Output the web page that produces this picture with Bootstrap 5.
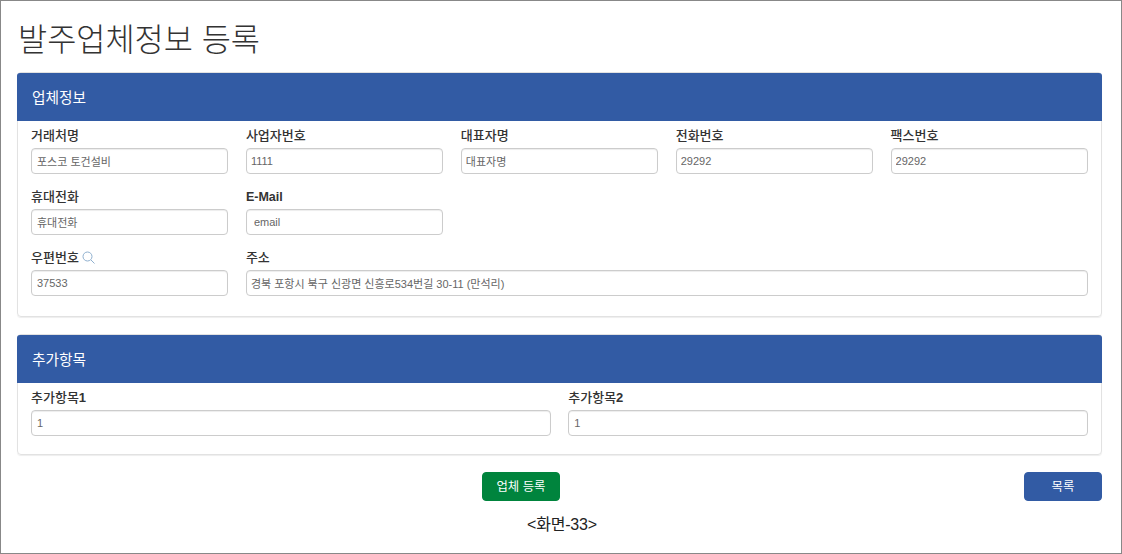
<!DOCTYPE html>
<html lang="ko"><head><meta charset="utf-8">
<link rel="stylesheet" href="https://cdn.jsdelivr.net/npm/bootstrap@5.3.0/dist/css/bootstrap.min.css">
<style>
html,body{height:100%;margin:0}
body{font-family:"Liberation Sans","Noto Sans CJK KR",sans-serif;background:#fff;color:#333}
.frame{height:554px;border:1px solid #888;padding:0 19px 0 16px;overflow:hidden}
.page-ttl{font-family:"Liberation Sans","Noto Sans CJK KR",sans-serif;font-size:31.7px;font-weight:300;line-height:42px;margin:18px 0 11px 1px;color:#333}
.form-box{border:1px solid #e2e2e2;border-radius:4px;margin-bottom:17px;box-shadow:0 1px 1px #eee}
.box-head{background:#325ba4;color:#fff;font-size:14.7px;height:48px;line-height:50px;padding-left:15px;border-radius:3px 3px 0 0;margin:0 -1px}
.box-body{padding:7px 13px 18px 13px}
.box-body-sm{padding-bottom:16px}
.fld-row{--bs-gutter-x:17.5px;--bs-gutter-y:0}
.fld{margin-bottom:13px;height:48px}
.fld-last{margin-bottom:0}
.wide-fld{width:80%}
.fld-lbl{display:block;font-size:13px;font-weight:500;line-height:14px;height:14px;margin:1px 0 5px;color:#333}
.fld-lbl-en{font-weight:700;font-size:12.5px}
.fld-num{font-weight:700}
.fld-ctl.form-control{height:26px;min-height:26px;padding:0 4px;font-size:11px;line-height:24px;color:#666;border:1px solid #ccc;border-radius:4px;box-shadow:inset 0 1px 1px rgba(0,0,0,.075)}
.fld-ctl.ctl-pad{padding-left:5px}
.fld-ctl.ctl-mail{padding-left:7px}
.srch{vertical-align:-2px;margin-left:3px}
.act-row{height:29px}
.act-btn{height:29px;width:78px;padding:0;font-size:12.4px;line-height:29px;border-radius:4px;color:#fff}
.btn-reg{background:#00843d;border-color:#00843d}
.btn-lst{background:#325ba4;border-color:#325ba4}
.act-center{left:465px}
.caption{font-size:16px;color:#222;line-height:22px;margin-top:13px;text-align:center;padding-left:5px;letter-spacing:-.2px}
</style></head><body>
<div class="frame">
<h1 class="page-ttl">발주업체정보 등록</h1>
<div class="form-box">
<div class="box-head">업체정보</div>
<div class="box-body">
<div class="row row-cols-5 fld-row">
<div class="col fld"><label class="fld-lbl">거래처명</label><input class="form-control fld-ctl ctl-pad" value="포스코 토건설비"></div>
<div class="col fld"><label class="fld-lbl">사업자번호</label><input class="form-control fld-ctl" value="1111"></div>
<div class="col fld"><label class="fld-lbl">대표자명</label><input class="form-control fld-ctl" value="대표자명"></div>
<div class="col fld"><label class="fld-lbl">전화번호</label><input class="form-control fld-ctl" value="29292"></div>
<div class="col fld"><label class="fld-lbl">팩스번호</label><input class="form-control fld-ctl" value="29292"></div>
<div class="col fld"><label class="fld-lbl">휴대전화</label><input class="form-control fld-ctl ctl-pad" value="휴대전화"></div>
<div class="col fld"><label class="fld-lbl fld-lbl-en">E-Mail</label><input class="form-control fld-ctl ctl-mail" value="email"></div>
<div class="w-100"></div>
<div class="col fld fld-last"><label class="fld-lbl">우편번호<svg class="srch" width="13" height="13" viewBox="0 0 13 13" fill="none" stroke="#8fb0cf" stroke-width="1"><circle cx="5.5" cy="5.5" r="4.5"/><path d="M9 9l3.5 3.5"/></svg></label><input class="form-control fld-ctl ctl-pad" value="37533"></div>
<div class="col fld fld-last wide-fld"><label class="fld-lbl">주소</label><input class="form-control fld-ctl" value="경북 포항시 북구 신광면 신흥로534번길 30-11 (만석리)"></div>
</div></div></div>
<div class="form-box">
<div class="box-head">추가항목</div>
<div class="box-body box-body-sm">
<div class="row fld-row">
<div class="col-6 fld fld-last"><label class="fld-lbl">추가항목<span class="fld-num">1</span></label><input class="form-control fld-ctl ctl-pad" value="1"></div>
<div class="col-6 fld fld-last"><label class="fld-lbl">추가항목<span class="fld-num">2</span></label><input class="form-control fld-ctl ctl-pad" value="1"></div>
</div></div></div>
<div class="d-flex justify-content-between act-row">
<button class="btn act-btn btn-reg position-relative act-center">업체 등록</button>
<button class="btn act-btn btn-lst">목록</button>
</div>
<div class="caption">&lt;화면-33&gt;</div>
</div>
<script src="https://cdn.jsdelivr.net/npm/bootstrap@5.3.0/dist/js/bootstrap.bundle.min.js"></script>
</body></html>
